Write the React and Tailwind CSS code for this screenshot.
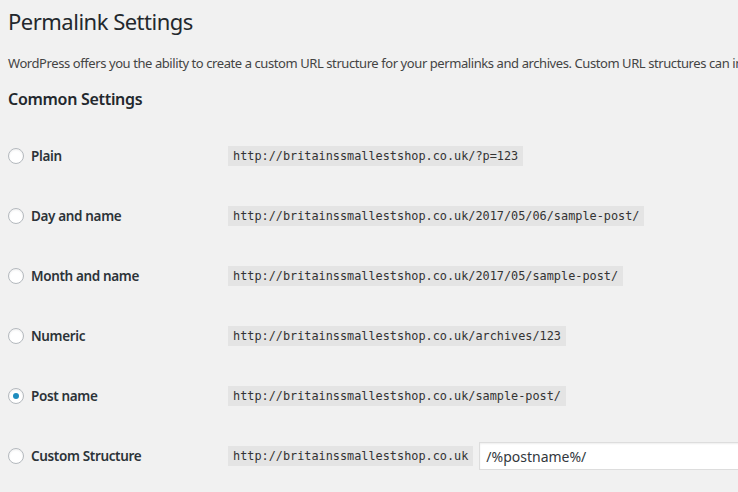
import React from 'react';

const sans = { fontFamily: '"Segoe UI", "Noto Sans", "Open Sans", sans-serif' };

const rows = [
  { label: 'Plain', url: 'http://britainssmallestshop.co.uk/?p=123' },
  { label: 'Day and name', url: 'http://britainssmallestshop.co.uk/2017/05/06/sample-post/' },
  { label: 'Month and name', url: 'http://britainssmallestshop.co.uk/2017/05/sample-post/' },
  { label: 'Numeric', url: 'http://britainssmallestshop.co.uk/archives/123' },
  { label: 'Post name', url: 'http://britainssmallestshop.co.uk/sample-post/', checked: true },
  { label: 'Custom Structure', url: 'http://britainssmallestshop.co.uk', custom: true },
];

function Radio({ checked }) {
  return (
    <span className="flex h-4 w-4 shrink-0 items-center justify-center rounded-full border border-[#b4b9be] bg-white shadow-[inset_0_1px_2px_rgba(0,0,0,0.07)]">
      {checked && <span className="h-[6px] w-[6px] rounded-full bg-[#1e8cbe]" />}
    </span>
  );
}

function Code({ children }) {
  return (
    <code className="whitespace-nowrap bg-[#e4e4e4] px-[5px] pb-[2px] pt-[3px] font-['DejaVu_Sans_Mono',monospace] text-[11.85px] leading-[15px] text-[#333]">
      {children}
    </code>
  );
}

export default function App() {
  return (
    <div className="h-[492px] w-[738px] overflow-hidden bg-[#f1f1f1] pl-2 text-[#23282d]" style={sans}>
      <h1 className="whitespace-nowrap pt-[7px] text-[22px] leading-[29px] font-normal tracking-[-0.5px]">
        Permalink Settings
      </h1>
      <p className="mt-[18px] whitespace-nowrap text-[13px] leading-[18px] tracking-[-0.42px] text-[#444]">
        WordPress offers you the ability to create a custom URL structure for your permalinks and archives. Custom URL structures can increase the aesthetic, usability, and forward-compatibility of your links.
      </p>
      <h2 className="mt-[16px] text-[16px] leading-[22px] font-semibold tracking-[-0.3px]">Common Settings</h2>

      <div className="mt-[16px]">
        {rows.map((row) => (
          <div key={row.label} className="flex h-[60px] items-center">
            <label className="flex w-[220px] shrink-0 items-center gap-[7px] text-[13.5px] font-semibold tracking-[-0.35px] text-[#2c3338]">
              <Radio checked={row.checked} />
              {row.label}
            </label>
            <Code>{row.url}</Code>
            {row.custom && (
              <input
                readOnly
                value="/%postname%/"
                className="ml-[6px] h-[28px] w-[300px] shrink-0 border border-[#ddd] bg-white px-[6px] text-[14px] text-[#32373c] shadow-[inset_0_1px_2px_rgba(0,0,0,0.07)] outline-none"
                style={sans}
              />
            )}
          </div>
        ))}
      </div>
    </div>
  );
}
